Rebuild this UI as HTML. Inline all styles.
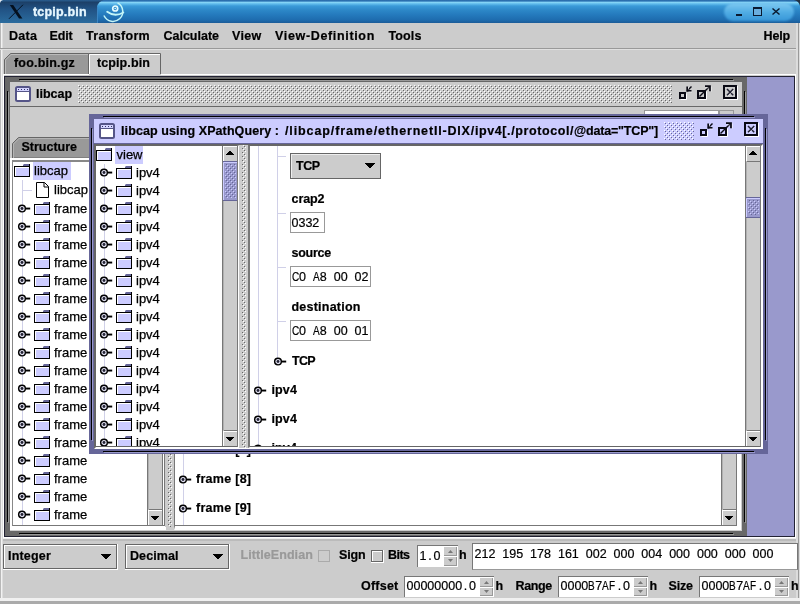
<!DOCTYPE html>
<html><head><meta charset="utf-8"><title>tcpip.bin</title>
<style>
html,body{margin:0;padding:0;}
body{width:800px;height:604px;overflow:hidden;background:#ccc;position:relative;font-family:"Liberation Sans",sans-serif;font-size:13px;color:#000;}
.a{position:absolute;box-sizing:border-box;}
.t{position:absolute;white-space:nowrap;line-height:16px;height:16px;-webkit-text-stroke:0.25px #000;}
.tb{position:absolute;white-space:nowrap;line-height:16px;height:16px;font-weight:bold;font-size:12.5px;-webkit-text-stroke:0.2px;}
.m{position:absolute;white-space:nowrap;line-height:16px;height:16px;font-size:12.5px;word-spacing:3.48px;-webkit-text-stroke:0.2px #000;}
.m i{display:inline-block;width:6.95px;text-align:center;font-style:normal;}
.m b{display:inline-block;width:6.95px;font-weight:normal;}
.m b u{display:inline-block;text-decoration:none;transform:scaleX(.8);transform-origin:0 0;}
svg{position:absolute;overflow:visible;}
.fld{position:absolute;background:#fff;border:1px solid #999;box-sizing:border-box;}
</style></head><body><div id="root" style="position:absolute;left:0;top:0;width:800px;height:604px;overflow:hidden;will-change:transform;">
<svg width="0" height="0" style="left:0;top:0">
<defs>
<pattern id="bg" width="4" height="4" patternUnits="userSpaceOnUse"><rect width="4" height="4" fill="#ccc"/><rect x="0" y="0" width="1" height="1" fill="#fff"/><rect x="1" y="1" width="1" height="1" fill="#666"/><rect x="2" y="2" width="1" height="1" fill="#fff"/><rect x="3" y="3" width="1" height="1" fill="#666"/></pattern>
<pattern id="bp" width="4" height="4" patternUnits="userSpaceOnUse"><rect width="4" height="4" fill="#ccf"/><rect x="0" y="0" width="1" height="1" fill="#fff"/><rect x="1" y="1" width="1" height="1" fill="#669"/><rect x="2" y="2" width="1" height="1" fill="#fff"/><rect x="3" y="3" width="1" height="1" fill="#669"/></pattern>
<pattern id="bt" width="4" height="4" patternUnits="userSpaceOnUse"><rect width="4" height="4" fill="#99c"/><rect x="0" y="0" width="1" height="1" fill="#ccf"/><rect x="1" y="1" width="1" height="1" fill="#669"/><rect x="2" y="2" width="1" height="1" fill="#ccf"/><rect x="3" y="3" width="1" height="1" fill="#669"/></pattern>
<g id="folder"><path d="M10 0 H16 V3 H9 V1 Z" fill="#669"/><rect x="0.5" y="2.5" width="15" height="10" fill="#ccf" stroke="#000"/><path d="M15.5 0 V3" stroke="#000"/><path d="M1.5 12 V3.5 H15" stroke="#fff" fill="none"/></g>
<g id="file"><path d="M0.5 0.5 H8.5 L12.5 4.5 V15.5 H0.5 Z" fill="#fff" stroke="#000"/><path d="M8 0.5 V5 H12.5" fill="none" stroke="#000"/></g>
<g id="hnd"><circle cx="4" cy="4.5" r="3.35" fill="#e4e4f4" stroke="#000" stroke-width="1.45"/><circle cx="4" cy="4.5" r="1.45" fill="#223"/><rect x="7.7" y="3.6" width="4.5" height="1.9" fill="#000"/></g>
<g id="ficon"><rect x="1" y="1" width="14" height="14" rx="1.5" fill="#fff" stroke="#558" stroke-width="2"/><rect x="2" y="2" width="12" height="3" fill="#d4d4ff"/><rect x="2" y="5" width="12" height="1" fill="#558"/><rect x="3" y="3" width="1" height="1" fill="#336"/><rect x="6" y="3" width="1" height="1" fill="#336"/><rect x="9" y="3" width="1" height="1" fill="#336"/><rect x="12" y="3" width="1" height="1" fill="#336"/></g>
<g id="up"><path d="M3 0 H5 V1 H6 V2 H7 V3 H8 V4 H0 V3 H1 V2 H2 V1 H3 Z" fill="#000"/></g>
<g id="dn"><path d="M0 0 H8 V1 H7 V2 H6 V3 H5 V4 H3 V3 H2 V2 H1 V1 H0 Z" fill="#000"/></g>
<g id="cdn"><path d="M0 0 H10 V1 H9 V2 H8 V3 H7 V4 H6 V5 H4 V4 H3 V3 H2 V2 H1 V1 H0 Z" fill="#000"/></g>
</defs></svg>

<div class="a" style="left:0;top:0;width:800px;height:23px;background:linear-gradient(#2867a6 0px,#2f78b8 1.2px,#8cd9f8 2.2px,#66c0ee 3.6px,#3a9ad8 6px,#2d88c8 10px,#2479bc 15px,#1e6cae 20px,#1b5c98 23px);"></div>
<svg style="left:0;top:0" width="120" height="23"><defs><linearGradient id="tg" x1="0" y1="0" x2="0" y2="1"><stop offset="0" stop-color="#2b5f92"/><stop offset="0.1" stop-color="#1c4068"/><stop offset="0.4" stop-color="#215284"/><stop offset="1" stop-color="#2b6c9e"/></linearGradient></defs><path d="M0 0 H104 Q98 1.5 97 7 V23 H0 Z" fill="url(#tg)"/><path d="M97.5 7 V23" stroke="#3a86c4" stroke-width="1"/><path d="M0 0 H3 Q0.5 0.5 0 3 Z" fill="#e8eef4"/></svg>
<div class="tb" style="left:33px;top:4px;letter-spacing:0.18px;color:#e6f7ff;-webkit-text-stroke:0.35px #e6f7ff;">tcpip.bin</div>
<svg style="left:0px;top:0px" width="30" height="23"><path d="M9.8 5 L13.2 5 L22.4 18.5 L19 18.5 Z" fill="#04101e"/><path d="M23 4.75 L9 18.75" stroke="#04101e" stroke-width="1" fill="none"/></svg>
<svg style="left:0;top:0" width="140" height="23"><g fill="none" stroke="#c4f6f8" stroke-linecap="round"><circle cx="115.2" cy="8.5" r="2.5" stroke="#e6fcff" stroke-width="1.7"/><path d="M118 3.2 A9.8 9.8 0 1 1 104.2 16" stroke-width="1.5"/><path d="M107.2 11.8 Q115 17.5 123.3 12.5" stroke-width="1.9"/></g><circle cx="115.2" cy="8.5" r="0.8" fill="#e6fcff"/></svg>
<div class="a" style="left:724px;top:3px;width:70px;height:18px;border-radius:9px;background:linear-gradient(#7fcaf2,#52ade4 50%,#3797d8);filter:blur(0.8px);"></div>
<div class="a" style="left:736px;top:14px;width:6px;height:2px;background:#0a1a30;"></div>
<div class="a" style="left:753px;top:7px;width:9px;height:9px;border:1px solid #0a1a30;border-top-width:2px;background:#6aaede;"></div>
<svg style="left:772px;top:8px" width="9" height="8"><path d="M0.5 0.5 L7.5 6.5 M7.5 0.5 L0.5 6.5" stroke="#0a1a30" stroke-width="1.5"/></svg>
<svg style="left:790px;top:0" width="10" height="10"><path d="M10 0 V6 Q9 1 4 0 Z" fill="#234"/></svg>
<div class="a" style="left:0;top:23px;width:800px;height:581px;background:#ccc;"></div><div class="a" style="left:0;top:23px;width:1px;height:581px;background:#b8b8b8;"></div><div class="a" style="left:1px;top:23px;width:1px;height:581px;background:#f2f2f2;"></div><div class="a" style="left:2px;top:23px;width:1px;height:581px;background:#ddd;"></div><div class="a" style="left:798px;top:23px;width:2px;height:581px;background:#ddd;"></div><div class="a" style="left:0;top:48px;width:800px;height:1px;background:#999;"></div><div class="a" style="left:0;top:49px;width:800px;height:1px;background:#e0e0e0;"></div><div class="tb" style="left:9px;top:28px;letter-spacing:0.28px;">Data</div><div class="tb" style="left:49.5px;top:28px;letter-spacing:-0.15px;">Edit</div><div class="tb" style="left:86px;top:28px;letter-spacing:0.32px;">Transform</div><div class="tb" style="left:163.5px;top:28px;letter-spacing:-0.01px;">Calculate</div><div class="tb" style="left:232px;top:28px;letter-spacing:0.36px;">View</div><div class="tb" style="left:275px;top:28px;letter-spacing:0.66px;">View-Definition</div><div class="tb" style="left:388.5px;top:28px;letter-spacing:0.12px;">Tools</div><div class="tb" style="left:763.5px;top:28px;letter-spacing:-0.15px;">Help</div>
<svg style="left:0;top:50px" width="170" height="27">
<path d="M4.5 25 V9.5 L10.5 3.5 H88.5 V25 Z" fill="#999" stroke="#666" stroke-width="1"/>
<path d="M88.5 25 V3.5 H160.5 V25" fill="#ccc" stroke="#666" stroke-width="1"/>
<path d="M89.5 25 V4.5 H160" fill="none" stroke="#fff" stroke-width="1"/>
<path d="M5.5 25 V10 L11 4.5 H88" fill="none" stroke="#bbb" stroke-width="1"/>
</svg>
<div class="tb" style="left:14px;top:55px;letter-spacing:0.20px;">foo.bin.gz</div><div class="tb" style="left:97px;top:55px;letter-spacing:0.10px;">tcpip.bin</div>

<div class="a" style="left:3px;top:74px;width:793px;height:465px;background:#fff;"></div>
<div class="a" style="left:89px;top:74px;width:72px;height:1px;background:#ccc;"></div>
<div class="a" style="left:4px;top:75px;width:791px;height:1px;background:#ccc;"></div>
<div class="a" style="left:4px;top:76px;width:791px;height:461px;background:#223;"></div>
<div class="a" style="left:5px;top:77px;width:789px;height:459px;background:#99c;"></div>
<div class="a" style="left:3px;top:538px;width:793px;height:1px;background:#eee;"></div>
<div class="a" style="left:3px;top:539px;width:793px;height:2px;background:#bbb;"></div>
<div class="a" style="left:796px;top:23px;width:2px;height:581px;background:#dcdcdc;"></div>
<div class="a" style="left:798px;top:23px;width:1px;height:581px;background:#999;"></div>
<div class="a" style="left:799px;top:23px;width:1px;height:581px;background:#ddd;"></div>
<div class="a" style="left:5px;top:77px;width:742px;height:459px;background:#686868;"></div><div class="a" style="left:19px;top:79px;width:714px;height:1px;background:#000;"></div><div class="a" style="left:19px;top:533px;width:714px;height:1px;background:#000;"></div><div class="a" style="left:7px;top:91px;width:1px;height:431px;background:#000;"></div><div class="a" style="left:744px;top:91px;width:1px;height:431px;background:#000;"></div><div class="a" style="left:20px;top:80px;width:714px;height:1px;background:#999;"></div><div class="a" style="left:20px;top:534px;width:714px;height:1px;background:#999;"></div><div class="a" style="left:8px;top:92px;width:1px;height:431px;background:#999;"></div><div class="a" style="left:745px;top:92px;width:1px;height:431px;background:#999;"></div><div class="a" style="left:10px;top:82px;width:732px;height:449px;background:#ccc;"></div><div class="a" style="left:10px;top:82px;width:732px;height:25px;background:#ccc;border-bottom:1px solid #686868;"></div><svg style="left:15px;top:86px" width="16" height="16"><use href="#ficon"/></svg>
<div class="tb" style="left:36px;top:86px;letter-spacing:-0.02px;">libcap</div>
<svg style="left:78px;top:85px" width="594" height="18"><rect width="594" height="18" fill="url(#bg)"/></svg>
<svg style="left:678px;top:85px" width="60" height="16"><g><rect x="2" y="8" width="5" height="5" fill="#ccc" stroke="#0a0a14" stroke-width="2"/><path d="M2.5 14.5 H8.5 V8.5" fill="none" stroke="#fff" stroke-width="1"/><path d="M9 6 L13.5 1.5" stroke="#0a0a14" stroke-width="1.4" fill="none"/><path d="M9.2 1.5 V5.8 H13.5" stroke="#0a0a14" stroke-width="1.7" fill="none"/><path d="M10.5 2 V4.5 M10.5 7 H14" stroke="#fff" stroke-width="0.8" fill="none" opacity="0.7"/></g><g transform="translate(18,0)"><rect x="2" y="6" width="7" height="7" fill="#ccc" stroke="#0a0a14" stroke-width="2"/><path d="M2.5 14.5 H10.5 V6.5" fill="none" stroke="#fff" stroke-width="1"/><path d="M3.5 11.5 L13.5 1.5" stroke="#0a0a14" stroke-width="1.5"/><path d="M9 1.2 H14 V6.2" stroke="#0a0a14" stroke-width="1.8" fill="none"/><path d="M9.5 2.8 H12.5 M15.4 1.5 V6.5" stroke="#fff" stroke-width="0.8" fill="none" opacity="0.7"/></g><g transform="translate(45,0)"><rect x="1.5" y="1.5" width="13" height="13" fill="none" stroke="#fff" stroke-width="1"/><rect x="1" y="1" width="12" height="12" fill="#ccc" stroke="#0a0a14" stroke-width="2"/><path d="M4 4 L10.2 10.2 M10.2 4 L4 10.2" stroke="#223" stroke-width="1.5"/><path d="M5 11 L11 5" stroke="#fff" stroke-width="0.7" opacity="0.6"/></g></svg>
<div class="fld" style="left:644px;top:110px;width:75px;height:20px;"></div>
<div class="a" style="left:719px;top:110px;width:15px;height:20px;border:1px solid #999;"></div>

<svg style="left:11px;top:136px" width="160" height="26">
<path d="M1.5 24 V7.5 L7.5 1.5 H90 V22 H1.5 Z" fill="#999" stroke="#666"/>
<path d="M2.5 22 V8 L8 2.5 H90" fill="none" stroke="#b4b4b4"/>
</svg>
<div class="tb" style="left:21.5px;top:138.7px;letter-spacing:0.00px;">Structure</div>
<div class="a" style="left:10px;top:158px;width:156px;height:372px;background:#fff;"></div>
<div class="a" style="left:12px;top:160px;width:153px;height:366px;background:#fff;border:1px solid #777;border-top:2px solid #888;border-left:1px solid #888;"></div>
<div class="a" style="left:33px;top:162px;width:38px;height:18px;background:#ccf;"></div><div class="a" style="left:22px;top:180px;width:1px;height:345px;background:#d0d0e8;"></div><div class="a" style="left:22px;top:190px;width:10px;height:1px;background:#d0d0e8;"></div><svg style="left:14px;top:164px" width="16" height="13"><use href="#folder"/></svg><div class="t" style="left:34px;top:162.6px;">libcap</div><svg style="left:36px;top:182px" width="13" height="16"><use href="#file"/></svg><div class="t" style="left:54px;top:182px;">libcap</div><svg style="left:18px;top:204px" width="14" height="10"><use href="#hnd"/></svg><svg style="left:34px;top:202px" width="16" height="13"><use href="#folder"/></svg><div class="t" style="left:54px;top:200.6px;">frame</div><svg style="left:18px;top:222px" width="14" height="10"><use href="#hnd"/></svg><svg style="left:34px;top:220px" width="16" height="13"><use href="#folder"/></svg><div class="t" style="left:54px;top:218.6px;">frame</div><svg style="left:18px;top:240px" width="14" height="10"><use href="#hnd"/></svg><svg style="left:34px;top:238px" width="16" height="13"><use href="#folder"/></svg><div class="t" style="left:54px;top:236.6px;">frame</div><svg style="left:18px;top:258px" width="14" height="10"><use href="#hnd"/></svg><svg style="left:34px;top:256px" width="16" height="13"><use href="#folder"/></svg><div class="t" style="left:54px;top:254.6px;">frame</div><svg style="left:18px;top:276px" width="14" height="10"><use href="#hnd"/></svg><svg style="left:34px;top:274px" width="16" height="13"><use href="#folder"/></svg><div class="t" style="left:54px;top:272.6px;">frame</div><svg style="left:18px;top:294px" width="14" height="10"><use href="#hnd"/></svg><svg style="left:34px;top:292px" width="16" height="13"><use href="#folder"/></svg><div class="t" style="left:54px;top:290.6px;">frame</div><svg style="left:18px;top:312px" width="14" height="10"><use href="#hnd"/></svg><svg style="left:34px;top:310px" width="16" height="13"><use href="#folder"/></svg><div class="t" style="left:54px;top:308.6px;">frame</div><svg style="left:18px;top:330px" width="14" height="10"><use href="#hnd"/></svg><svg style="left:34px;top:328px" width="16" height="13"><use href="#folder"/></svg><div class="t" style="left:54px;top:326.6px;">frame</div><svg style="left:18px;top:348px" width="14" height="10"><use href="#hnd"/></svg><svg style="left:34px;top:346px" width="16" height="13"><use href="#folder"/></svg><div class="t" style="left:54px;top:344.6px;">frame</div><svg style="left:18px;top:366px" width="14" height="10"><use href="#hnd"/></svg><svg style="left:34px;top:364px" width="16" height="13"><use href="#folder"/></svg><div class="t" style="left:54px;top:362.6px;">frame</div><svg style="left:18px;top:384px" width="14" height="10"><use href="#hnd"/></svg><svg style="left:34px;top:382px" width="16" height="13"><use href="#folder"/></svg><div class="t" style="left:54px;top:380.6px;">frame</div><svg style="left:18px;top:402px" width="14" height="10"><use href="#hnd"/></svg><svg style="left:34px;top:400px" width="16" height="13"><use href="#folder"/></svg><div class="t" style="left:54px;top:398.6px;">frame</div><svg style="left:18px;top:420px" width="14" height="10"><use href="#hnd"/></svg><svg style="left:34px;top:418px" width="16" height="13"><use href="#folder"/></svg><div class="t" style="left:54px;top:416.6px;">frame</div><svg style="left:18px;top:438px" width="14" height="10"><use href="#hnd"/></svg><svg style="left:34px;top:436px" width="16" height="13"><use href="#folder"/></svg><div class="t" style="left:54px;top:434.6px;">frame</div><svg style="left:18px;top:456px" width="14" height="10"><use href="#hnd"/></svg><svg style="left:34px;top:454px" width="16" height="13"><use href="#folder"/></svg><div class="t" style="left:54px;top:452.6px;">frame</div><svg style="left:18px;top:474px" width="14" height="10"><use href="#hnd"/></svg><svg style="left:34px;top:472px" width="16" height="13"><use href="#folder"/></svg><div class="t" style="left:54px;top:470.6px;">frame</div><svg style="left:18px;top:492px" width="14" height="10"><use href="#hnd"/></svg><svg style="left:34px;top:490px" width="16" height="13"><use href="#folder"/></svg><div class="t" style="left:54px;top:488.6px;">frame</div><svg style="left:18px;top:510px" width="14" height="10"><use href="#hnd"/></svg><svg style="left:34px;top:508px" width="16" height="13"><use href="#folder"/></svg><div class="t" style="left:54px;top:506.6px;">frame</div><div class="a" style="left:147px;top:162px;width:17px;height:363px;background:#ccc;border-left:1px solid #777;border-right:1px solid #fff;"></div><div class="a" style="left:148px;top:162px;width:1px;height:363px;background:#b0b0b0;"></div><div class="a" style="left:162px;top:161px;width:1px;height:365px;background:#777;"></div><div class="a" style="left:148px;top:509px;width:14px;height:16px;background:#ccc;border-top:1px solid #777;border-left:1px solid #fff;"></div><div class="a" style="left:149px;top:510px;width:13px;height:1px;background:#fff;"></div><svg style="left:151px;top:516px" width="8" height="4"><use href="#dn"/></svg><svg style="left:165px;top:137px" width="9" height="390"><rect width="9" height="390" fill="#ccc"/><rect x="3" width="4" height="390" fill="url(#bg)"/></svg><div class="a" style="left:174px;top:136px;width:567px;height:394px;background:#fff;border:1px solid #777;border-right:4px solid #fff;border-bottom:4px solid #fff;"></div><div class="a" style="left:174px;top:525px;width:563px;height:1px;background:#777;"></div><div class="a" style="left:721px;top:137px;width:17px;height:388px;background:#ccc;border-left:1px solid #777;border-right:1px solid #fff;"></div><div class="a" style="left:722px;top:137px;width:1px;height:388px;background:#b0b0b0;"></div><div class="a" style="left:736px;top:136px;width:1px;height:390px;background:#777;"></div><div class="a" style="left:722px;top:509px;width:14px;height:16px;background:#ccc;border-top:1px solid #777;border-left:1px solid #fff;"></div><div class="a" style="left:723px;top:510px;width:13px;height:1px;background:#fff;"></div><svg style="left:725px;top:516px" width="8" height="4"><use href="#dn"/></svg><div class="a" style="left:183px;top:440px;width:1px;height:85px;background:#d0d0e8;"></div><div class="tb" style="left:196px;top:441.5px;letter-spacing:0.28px;">frame [7]</div><svg style="left:179px;top:475px" width="14" height="10"><use href="#hnd"/></svg><div class="tb" style="left:196px;top:470.5px;letter-spacing:0.28px;">frame [8]</div><svg style="left:179px;top:504px" width="14" height="10"><use href="#hnd"/></svg><div class="tb" style="left:196px;top:499.5px;letter-spacing:0.28px;">frame [9]</div><div class="a" style="left:89px;top:114px;width:679px;height:340px;background:#669;"></div><div class="a" style="left:103px;top:116px;width:651px;height:1px;background:#000;"></div><div class="a" style="left:103px;top:451px;width:651px;height:1px;background:#000;"></div><div class="a" style="left:91px;top:128px;width:1px;height:312px;background:#000;"></div><div class="a" style="left:765px;top:128px;width:1px;height:312px;background:#000;"></div><div class="a" style="left:104px;top:117px;width:651px;height:1px;background:#99c;"></div><div class="a" style="left:104px;top:452px;width:651px;height:1px;background:#99c;"></div><div class="a" style="left:92px;top:129px;width:1px;height:312px;background:#99c;"></div><div class="a" style="left:766px;top:129px;width:1px;height:312px;background:#99c;"></div><div class="a" style="left:94px;top:119px;width:669px;height:330px;background:#ccc;"></div><div class="a" style="left:94px;top:119px;width:669px;height:25px;background:#ccf;border-bottom:1px solid #669;"></div><svg style="left:99px;top:123px" width="16" height="16"><use href="#ficon"/></svg>
<div class="tb" style="left:121px;top:123px;letter-spacing:0.10px;">libcap using XPathQuery :</div><div class="tb" style="left:285px;top:123px;letter-spacing:0.89px;">/libcap/frame/</div><div class="tb" style="left:378px;top:123px;letter-spacing:0.82px;">ethernetII-DIX/</div><div class="tb" style="left:475px;top:123px;letter-spacing:0.59px;">ipv4[./protocol/</div><div class="tb" style="left:574px;top:123px;letter-spacing:-0.18px;">@data="TCP"]</div>
<svg style="left:664px;top:122px" width="30" height="18"><rect width="30" height="18" fill="url(#bp)"/></svg>
<svg style="left:699px;top:122px" width="60" height="16"><g><rect x="2" y="8" width="5" height="5" fill="#ccf" stroke="#0a0a14" stroke-width="2"/><path d="M2.5 14.5 H8.5 V8.5" fill="none" stroke="#fff" stroke-width="1"/><path d="M9 6 L13.5 1.5" stroke="#0a0a14" stroke-width="1.4" fill="none"/><path d="M9.2 1.5 V5.8 H13.5" stroke="#0a0a14" stroke-width="1.7" fill="none"/><path d="M10.5 2 V4.5 M10.5 7 H14" stroke="#fff" stroke-width="0.8" fill="none" opacity="0.7"/></g><g transform="translate(18,0)"><rect x="2" y="6" width="7" height="7" fill="#ccf" stroke="#0a0a14" stroke-width="2"/><path d="M2.5 14.5 H10.5 V6.5" fill="none" stroke="#fff" stroke-width="1"/><path d="M3.5 11.5 L13.5 1.5" stroke="#0a0a14" stroke-width="1.5"/><path d="M9 1.2 H14 V6.2" stroke="#0a0a14" stroke-width="1.8" fill="none"/><path d="M9.5 2.8 H12.5 M15.4 1.5 V6.5" stroke="#fff" stroke-width="0.8" fill="none" opacity="0.7"/></g><g transform="translate(45,0)"><rect x="1.5" y="1.5" width="13" height="13" fill="none" stroke="#fff" stroke-width="1"/><rect x="1" y="1" width="12" height="12" fill="#ccf" stroke="#0a0a14" stroke-width="2"/><path d="M4 4 L10.2 10.2 M10.2 4 L4 10.2" stroke="#223" stroke-width="1.5"/><path d="M5 11 L11 5" stroke="#fff" stroke-width="0.7" opacity="0.6"/></g></svg>
<div class="a" style="left:94px;top:144px;width:669px;height:305px;background:#ccc;border-top:1px solid #666;border-left:1px solid #666;border-right:1px solid #fff;border-bottom:1px solid #fff;"></div>
<div class="a" style="left:95px;top:145px;width:144px;height:303px;background:#fff;border:1px solid #666;border-right:1px solid #fff;border-bottom:1px solid #fff;"></div>
<div class="a" style="left:96px;top:446px;width:142px;height:1px;background:#666;"></div>
<div class="a" style="left:115px;top:146px;width:28px;height:18px;background:#ccf;"></div>
<div class="a" style="left:104px;top:164px;width:1px;height:282px;background:#d0d0e8;"></div>
<svg style="left:96px;top:148px" width="16" height="13"><use href="#folder"/></svg>
<div class="t" style="left:116.5px;top:146.6px;">view</div>
<div class="a" style="left:96px;top:146px;width:126px;height:300px;overflow:hidden;"><svg style="left:4px;top:22px" width="14" height="10"><use href="#hnd"/></svg><svg style="left:20px;top:20px" width="16" height="13"><use href="#folder"/></svg><div class="t" style="left:40px;top:18.6px;">ipv4</div><svg style="left:4px;top:40px" width="14" height="10"><use href="#hnd"/></svg><svg style="left:20px;top:38px" width="16" height="13"><use href="#folder"/></svg><div class="t" style="left:40px;top:36.6px;">ipv4</div><svg style="left:4px;top:58px" width="14" height="10"><use href="#hnd"/></svg><svg style="left:20px;top:56px" width="16" height="13"><use href="#folder"/></svg><div class="t" style="left:40px;top:54.6px;">ipv4</div><svg style="left:4px;top:76px" width="14" height="10"><use href="#hnd"/></svg><svg style="left:20px;top:74px" width="16" height="13"><use href="#folder"/></svg><div class="t" style="left:40px;top:72.6px;">ipv4</div><svg style="left:4px;top:94px" width="14" height="10"><use href="#hnd"/></svg><svg style="left:20px;top:92px" width="16" height="13"><use href="#folder"/></svg><div class="t" style="left:40px;top:90.6px;">ipv4</div><svg style="left:4px;top:112px" width="14" height="10"><use href="#hnd"/></svg><svg style="left:20px;top:110px" width="16" height="13"><use href="#folder"/></svg><div class="t" style="left:40px;top:108.6px;">ipv4</div><svg style="left:4px;top:130px" width="14" height="10"><use href="#hnd"/></svg><svg style="left:20px;top:128px" width="16" height="13"><use href="#folder"/></svg><div class="t" style="left:40px;top:126.6px;">ipv4</div><svg style="left:4px;top:148px" width="14" height="10"><use href="#hnd"/></svg><svg style="left:20px;top:146px" width="16" height="13"><use href="#folder"/></svg><div class="t" style="left:40px;top:144.6px;">ipv4</div><svg style="left:4px;top:166px" width="14" height="10"><use href="#hnd"/></svg><svg style="left:20px;top:164px" width="16" height="13"><use href="#folder"/></svg><div class="t" style="left:40px;top:162.6px;">ipv4</div><svg style="left:4px;top:184px" width="14" height="10"><use href="#hnd"/></svg><svg style="left:20px;top:182px" width="16" height="13"><use href="#folder"/></svg><div class="t" style="left:40px;top:180.6px;">ipv4</div><svg style="left:4px;top:202px" width="14" height="10"><use href="#hnd"/></svg><svg style="left:20px;top:200px" width="16" height="13"><use href="#folder"/></svg><div class="t" style="left:40px;top:198.6px;">ipv4</div><svg style="left:4px;top:220px" width="14" height="10"><use href="#hnd"/></svg><svg style="left:20px;top:218px" width="16" height="13"><use href="#folder"/></svg><div class="t" style="left:40px;top:216.6px;">ipv4</div><svg style="left:4px;top:238px" width="14" height="10"><use href="#hnd"/></svg><svg style="left:20px;top:236px" width="16" height="13"><use href="#folder"/></svg><div class="t" style="left:40px;top:234.6px;">ipv4</div><svg style="left:4px;top:256px" width="14" height="10"><use href="#hnd"/></svg><svg style="left:20px;top:254px" width="16" height="13"><use href="#folder"/></svg><div class="t" style="left:40px;top:252.6px;">ipv4</div><svg style="left:4px;top:274px" width="14" height="10"><use href="#hnd"/></svg><svg style="left:20px;top:272px" width="16" height="13"><use href="#folder"/></svg><div class="t" style="left:40px;top:270.6px;">ipv4</div><svg style="left:4px;top:292px" width="14" height="10"><use href="#hnd"/></svg><svg style="left:20px;top:290px" width="16" height="13"><use href="#folder"/></svg><div class="t" style="left:40px;top:288.6px;">ipv4</div></div><div class="a" style="left:222px;top:146px;width:17px;height:300px;background:#ccc;border-left:1px solid #777;border-right:1px solid #fff;"></div><div class="a" style="left:223px;top:146px;width:1px;height:300px;background:#b0b0b0;"></div><div class="a" style="left:237px;top:145px;width:1px;height:302px;background:#777;"></div><div class="a" style="left:223px;top:146px;width:14px;height:16px;background:#ccc;border-top:1px solid #fff;border-left:1px solid #fff;border-bottom:1px solid #777;"></div><svg style="left:226px;top:151px" width="8" height="4"><use href="#up"/></svg><div class="a" style="left:223px;top:430px;width:14px;height:16px;background:#ccc;border-top:1px solid #777;border-left:1px solid #fff;"></div><div class="a" style="left:224px;top:431px;width:13px;height:1px;background:#fff;"></div><svg style="left:226px;top:437px" width="8" height="4"><use href="#dn"/></svg><svg style="left:223px;top:161px" width="14" height="40"><rect width="14" height="40" fill="#99c"/><rect x="2" y="3" width="11" height="34" fill="url(#bt)"/><path d="M0.5 39 V1.5 H14" fill="none" stroke="#ccf"/><path d="M0 0.5 H14 M0 39.5 H14" fill="none" stroke="#669"/></svg><svg style="left:239px;top:145px" width="9" height="303"><rect width="9" height="303" fill="#ccc"/><rect x="3" width="4" height="303" fill="url(#bg)"/></svg>
<div class="a" style="left:248px;top:145px;width:514px;height:303px;background:#fff;border:1px solid #666;border-left:2px solid #777;border-right:1px solid #fff;border-bottom:1px solid #fff;"></div>
<div class="a" style="left:250px;top:446px;width:511px;height:1px;background:#666;"></div>
<div class="a" style="left:258px;top:146px;width:1px;height:300px;background:#d0d0e8;"></div>
<div class="a" style="left:277px;top:146px;width:1px;height:212px;background:#d0d0e8;"></div>
<div class="a" style="left:277px;top:156px;width:9px;height:1px;background:#d0d0e8;"></div>
<div class="a" style="left:277px;top:213px;width:9px;height:1px;background:#d0d0e8;"></div>
<div class="a" style="left:277px;top:267px;width:9px;height:1px;background:#d0d0e8;"></div>
<div class="a" style="left:277px;top:321px;width:9px;height:1px;background:#d0d0e8;"></div>
<div class="a" style="left:290px;top:153px;width:91px;height:26px;background:#ccc;border:1px solid #666;"></div>
<div class="a" style="left:291px;top:154px;width:89px;height:24px;border-top:1px solid #eee;border-left:1px solid #eee;"></div>
<div class="tb" style="left:296px;top:157.5px;letter-spacing:-0.47px;">TCP</div>
<svg style="left:365px;top:163px" width="10" height="5"><use href="#cdn"/></svg>
<div class="tb" style="left:291.5px;top:190.6px;letter-spacing:-0.07px;">crap2</div>
<div class="fld" style="left:290px;top:212px;width:35px;height:21px;"></div>
<div class="m" style="left:291.5px;top:214.7px;">0332</div>
<div class="tb" style="left:291.5px;top:244.6px;letter-spacing:-0.28px;">source</div>
<div class="fld" style="left:290px;top:266px;width:81px;height:21px;"></div>
<div class="m" style="left:292px;top:268.7px;"><b><u>C</u></b>0 <b><u>A</u></b>8 00 02</div>
<div class="tb" style="left:291.5px;top:298.6px;letter-spacing:0.23px;">destination</div>
<div class="fld" style="left:290px;top:320px;width:81px;height:21px;"></div>
<div class="m" style="left:292px;top:322.7px;"><b><u>C</u></b>0 <b><u>A</u></b>8 00 01</div>
<svg style="left:274px;top:357px" width="14" height="10"><use href="#hnd"/></svg><div class="tb" style="left:292px;top:352.5px;letter-spacing:-0.73px;">TCP</div><svg style="left:254px;top:386px" width="14" height="10"><use href="#hnd"/></svg><div class="tb" style="left:271.5px;top:381.5px;letter-spacing:0.12px;">ipv4</div><svg style="left:254px;top:415px" width="14" height="10"><use href="#hnd"/></svg><div class="tb" style="left:271.5px;top:410.5px;letter-spacing:0.12px;">ipv4</div><div class="a" style="left:250px;top:436px;width:100px;height:10px;overflow:hidden;"><svg style="left:4px;top:8px" width="14" height="10"><use href="#hnd"/></svg><div class="tb" style="left:21.5px;top:3.5px;letter-spacing:0.12px;">ipv4</div></div><div class="a" style="left:745px;top:146px;width:17px;height:300px;background:#ccc;border-left:1px solid #777;border-right:1px solid #fff;"></div><div class="a" style="left:746px;top:146px;width:1px;height:300px;background:#b0b0b0;"></div><div class="a" style="left:760px;top:145px;width:1px;height:302px;background:#777;"></div><div class="a" style="left:746px;top:146px;width:14px;height:16px;background:#ccc;border-top:1px solid #fff;border-left:1px solid #fff;border-bottom:1px solid #777;"></div><svg style="left:749px;top:151px" width="8" height="4"><use href="#up"/></svg><div class="a" style="left:746px;top:430px;width:14px;height:16px;background:#ccc;border-top:1px solid #777;border-left:1px solid #fff;"></div><div class="a" style="left:747px;top:431px;width:13px;height:1px;background:#fff;"></div><svg style="left:749px;top:437px" width="8" height="4"><use href="#dn"/></svg><svg style="left:746px;top:197px" width="14" height="21"><rect width="14" height="21" fill="#99c"/><rect x="2" y="3" width="11" height="15" fill="url(#bt)"/><path d="M0.5 20 V1.5 H14" fill="none" stroke="#ccf"/><path d="M0 0.5 H14 M0 20.5 H14" fill="none" stroke="#669"/></svg><div class="a" style="left:3px;top:544px;width:115px;height:26px;background:#fff;"></div><div class="a" style="left:3px;top:544px;width:114px;height:25px;background:#ccc;border:1px solid #666;"></div><div class="a" style="left:4px;top:545px;width:112px;height:23px;border-top:1px solid #fff;border-left:1px solid #fff;"></div><div class="tb" style="left:8px;top:548px;letter-spacing:0.19px;">Integer</div><svg style="left:101px;top:554px" width="10" height="5"><use href="#cdn"/></svg><div class="a" style="left:125px;top:544px;width:105px;height:26px;background:#fff;"></div><div class="a" style="left:125px;top:544px;width:104px;height:25px;background:#ccc;border:1px solid #666;"></div><div class="a" style="left:126px;top:545px;width:102px;height:23px;border-top:1px solid #fff;border-left:1px solid #fff;"></div><div class="tb" style="left:130px;top:548px;letter-spacing:0.08px;">Decimal</div><svg style="left:213px;top:554px" width="10" height="5"><use href="#cdn"/></svg><div class="tb" style="left:240.5px;top:547px;letter-spacing:0.07px;color:#999;">LittleEndian</div><div class="a" style="left:318px;top:550px;width:12px;height:12px;border:1px solid #aaa;"></div><div class="tb" style="left:339px;top:547px;letter-spacing:-0.12px;">Sign</div><div class="a" style="left:371px;top:550px;width:13px;height:13px;background:#fff;"></div><div class="a" style="left:371px;top:550px;width:12px;height:12px;background:#ccc;border:1px solid #666;"></div><div class="a" style="left:372px;top:551px;width:10px;height:10px;border-top:1px solid #fff;border-left:1px solid #fff;"></div><div class="tb" style="left:388px;top:547px;letter-spacing:-0.53px;">Bits</div><div class="a" style="left:417px;top:545px;width:41px;height:22px;background:#fff;border-top:1px solid #777;border-left:1px solid #777;"></div><div class="a" style="left:444px;top:547px;width:13px;height:9px;background:#ccc;border-right:1px solid #999;border-bottom:1px solid #999;"></div><div class="a" style="left:444px;top:557px;width:13px;height:9px;background:#ccc;border-right:1px solid #999;border-bottom:1px solid #999;"></div><svg style="left:448px;top:550px" width="5" height="3"><path d="M0 3 L2.5 0 L5 3 Z" fill="#777"/></svg><svg style="left:448px;top:559px" width="5" height="3"><path d="M0 0 L5 0 L2.5 3 Z" fill="#777"/></svg><div class="m" style="left:419.5px;top:548px;">1<i>.</i>0</div><div class="tb" style="left:459px;top:547px;letter-spacing:-0.64px;">h</div><div class="a" style="left:472px;top:543px;width:326px;height:27px;background:#fff;border:1px solid #777;border-bottom-color:#999;"></div><div class="m" style="left:474.5px;top:545.5px;">212 195 178 161 002 000 004 000 000 000 000</div><div class="tb" style="left:361px;top:578px;letter-spacing:0.23px;">Offset</div><div class="a" style="left:404px;top:576px;width:90px;height:21px;background:#fff;border-top:1px solid #777;border-left:1px solid #777;"></div><div class="a" style="left:480px;top:578px;width:13px;height:9px;background:#ccc;border-right:1px solid #999;border-bottom:1px solid #999;"></div><div class="a" style="left:480px;top:588px;width:13px;height:8px;background:#ccc;border-right:1px solid #999;border-bottom:1px solid #999;"></div><svg style="left:484px;top:581px" width="5" height="3"><path d="M0 3 L2.5 0 L5 3 Z" fill="#777"/></svg><svg style="left:484px;top:590px" width="5" height="3"><path d="M0 0 L5 0 L2.5 3 Z" fill="#777"/></svg><div class="m" style="left:406.5px;top:578px;">00000000<i>.</i>0</div><div class="tb" style="left:495.5px;top:578px;letter-spacing:-0.64px;">h</div><div class="tb" style="left:515.5px;top:578px;letter-spacing:-0.40px;">Range</div><div class="a" style="left:558px;top:576px;width:90px;height:21px;background:#fff;border-top:1px solid #777;border-left:1px solid #777;"></div><div class="a" style="left:634px;top:578px;width:13px;height:9px;background:#ccc;border-right:1px solid #999;border-bottom:1px solid #999;"></div><div class="a" style="left:634px;top:588px;width:13px;height:8px;background:#ccc;border-right:1px solid #999;border-bottom:1px solid #999;"></div><svg style="left:638px;top:581px" width="5" height="3"><path d="M0 3 L2.5 0 L5 3 Z" fill="#777"/></svg><svg style="left:638px;top:590px" width="5" height="3"><path d="M0 0 L5 0 L2.5 3 Z" fill="#777"/></svg><div class="m" style="left:560.5px;top:578px;">0000<b><u>B</u></b>7<b><u>A</u></b><b><u>F</u></b><i>.</i>0</div><div class="tb" style="left:649.5px;top:578px;letter-spacing:-0.64px;">h</div><div class="tb" style="left:668.5px;top:578px;letter-spacing:-0.18px;">Size</div><div class="a" style="left:699px;top:576px;width:90px;height:21px;background:#fff;border-top:1px solid #777;border-left:1px solid #777;"></div><div class="a" style="left:775px;top:578px;width:13px;height:9px;background:#ccc;border-right:1px solid #999;border-bottom:1px solid #999;"></div><div class="a" style="left:775px;top:588px;width:13px;height:8px;background:#ccc;border-right:1px solid #999;border-bottom:1px solid #999;"></div><svg style="left:779px;top:581px" width="5" height="3"><path d="M0 3 L2.5 0 L5 3 Z" fill="#777"/></svg><svg style="left:779px;top:590px" width="5" height="3"><path d="M0 0 L5 0 L2.5 3 Z" fill="#777"/></svg><div class="m" style="left:701.5px;top:578px;">0000<b><u>B</u></b>7<b><u>A</u></b><b><u>F</u></b><i>.</i>0</div><div class="tb" style="left:791px;top:578px;letter-spacing:-0.64px;">h</div><div class="a" style="left:0;top:598px;width:800px;height:3px;background:#f0f0f0;"></div><div class="a" style="left:0;top:601px;width:800px;height:3px;background:#aaa;"></div></div></body></html>
